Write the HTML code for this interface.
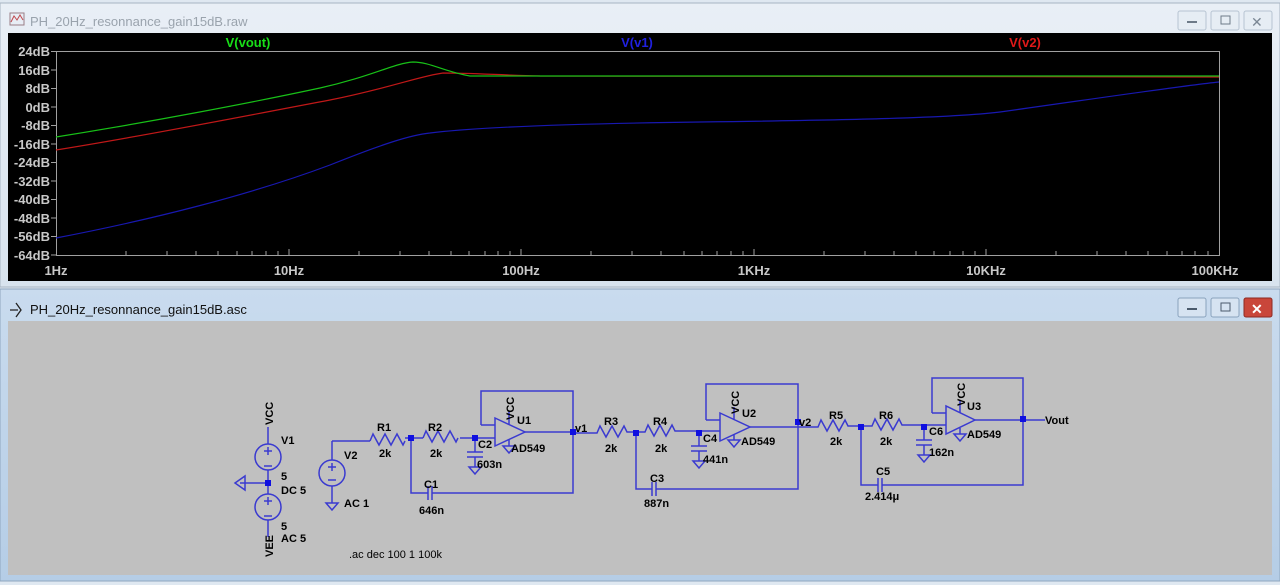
<!DOCTYPE html>
<html><head><meta charset="utf-8"><style>
html,body{margin:0;padding:0;background:#dfe8f1;width:1280px;height:585px;overflow:hidden;font-family:"Liberation Sans",sans-serif}
svg{position:absolute;left:0;top:0}
</style></head><body>
<svg width="1280" height="585" viewBox="0 0 1280 585" xmlns="http://www.w3.org/2000/svg" font-family="Liberation Sans, sans-serif">
<defs>
<linearGradient id="tb" x1="0" y1="0" x2="0" y2="1"><stop offset="0" stop-color="#e9eff6"/><stop offset="1" stop-color="#d8e3ee"/></linearGradient>
<linearGradient id="tb2" x1="0" y1="0" x2="0" y2="1"><stop offset="0" stop-color="#c9dbee"/><stop offset="1" stop-color="#b5cde6"/></linearGradient>
</defs>
<rect x="0" y="3" width="1280" height="284" fill="url(#tb)" stroke="#a7b4c2"/>
<rect x="10" y="13" width="14" height="12" fill="none" stroke="#9a7e86"/>
<path d="M11 22 l3-6 3 4 3-5 3 5" stroke="#c0494f" fill="none"/>
<text x="30" y="26" font-size="13" fill="#9aa3ad">PH_20Hz_resonnance_gain15dB.raw</text>
<g fill="#e6edf4" stroke="#b7c4d2"><rect x="1178" y="11" width="28" height="19" rx="2"/><rect x="1211" y="11" width="28" height="19" rx="2"/><rect x="1244" y="11" width="28" height="19" rx="2"/></g>
<rect x="1187" y="21" width="10" height="2" fill="#6d7a88"/><rect x="1221" y="16" width="9" height="8" fill="none" stroke="#6d7a88"/>
<text x="1251" y="27" font-size="14" fill="#7b8794">✕</text>
<rect x="8" y="33" width="1264" height="248" fill="#000"/>
<rect x="56.5" y="51.5" width="1163" height="204" fill="none" stroke="#a0a0a0"/>
<g font-size="13" font-weight="bold" fill="#c8c8c8" text-anchor="end">
<text x="50" y="56">24dB</text><text x="50" y="75">16dB</text><text x="50" y="93">8dB</text><text x="50" y="112">0dB</text><text x="50" y="130">-8dB</text><text x="50" y="149">-16dB</text><text x="50" y="167">-24dB</text><text x="50" y="186">-32dB</text><text x="50" y="204">-40dB</text><text x="50" y="223">-48dB</text><text x="50" y="241">-56dB</text><text x="50" y="260">-64dB</text>
</g>
<g stroke="#a0a0a0"><path d="M51 51.5h5M51 70h5M51 88.5h5M51 107h5M51 125.5h5M51 144h5M51 162.5h5M51 181h5M51 199.5h5M51 218h5M51 236.5h5M51 255h5"/>
<path d="M126 255v-4M167 255v-4M196 255v-4M218 255v-4M237 255v-4M252 255v-4M266 255v-4M278 255v-4M289 255v-6M359 255v-4M400 255v-4M429 255v-4M451 255v-4M469 255v-4M485 255v-4M498 255v-4M510 255v-4M521 255v-6M591 255v-4M632 255v-4M661 255v-4M684 255v-4M702 255v-4M717 255v-4M731 255v-4M743 255v-4M754 255v-6M824 255v-4M865 255v-4M894 255v-4M916 255v-4M934 255v-4M950 255v-4M963 255v-4M975 255v-4M986 255v-6M1056 255v-4M1097 255v-4M1126 255v-4M1148 255v-4M1167 255v-4M1182 255v-4M1195 255v-4M1208 255v-4"/></g>
<g font-size="13" font-weight="bold" fill="#c8c8c8" text-anchor="middle">
<text x="56" y="275">1Hz</text><text x="289" y="275">10Hz</text><text x="521" y="275">100Hz</text><text x="754" y="275">1KHz</text><text x="986" y="275">10KHz</text><text x="1215" y="275">100KHz</text>
</g>
<g font-size="13" font-weight="bold" text-anchor="middle">
<text x="248" y="47" fill="#18e018">V(vout)</text><text x="637" y="47" fill="#2020e0">V(v1)</text><text x="1025" y="47" fill="#e01818">V(v2)</text>
</g>
<path d="M56 238 C150 220 250 195 330 165 C380 145 410 135 430 133 C470 128 550 124 700 122 C850 120 950 118 1000 112 C1100 98 1180 86 1219 82" fill="none" stroke="#1818b0" stroke-width="1.2"/>
<path d="M56 150 C150 135 250 115 330 100 C390 88 420 76 443 73 C470 73 500 75 540 76 L1219 77" fill="none" stroke="#c01818" stroke-width="1.2"/>
<path d="M56 137 C150 122 250 103 320 88 C370 77 395 63 413 62 C430 62 445 72 470 76 L1219 76" fill="none" stroke="#18c018" stroke-width="1.2"/>
<rect x="0" y="289" width="1280" height="292" fill="url(#tb2)" stroke="#8fa6bf"/>
<path d="M10 310 h8 M16 303 l5 7 -5 7" stroke="#222" fill="none" stroke-width="1.3"/>
<text x="30" y="314" font-size="13" fill="#111">PH_20Hz_resonnance_gain15dB.asc</text>
<g fill="#d6e3f1" stroke="#8aa3bd"><rect x="1178" y="298" width="28" height="19" rx="2"/><rect x="1211" y="298" width="28" height="19" rx="2"/></g>
<rect x="1244" y="298" width="28" height="19" rx="2" fill="#c9463a" stroke="#8d2a22"/>
<rect x="1187" y="308" width="10" height="2" fill="#4a5a6c"/><rect x="1221" y="303" width="9" height="8" fill="none" stroke="#4a5a6c"/>
<text x="1251" y="314" font-size="14" font-weight="bold" fill="#fff">✕</text>
<rect x="8" y="321" width="1264" height="254" fill="#c0c0c0"/>
<g stroke="#3a3ad0" fill="none" stroke-width="1.5">
<path d="M268 427V444M268 470V494M268 520V537M240 483H268"/>
<circle cx="268" cy="457" r="13"/><circle cx="268" cy="507" r="13"/>
<path d="M264 451h8M268 447v8M264 466h8M264 501h8M268 497v8M264 516h8"/>
<path d="M245 476v14l-10-7z"/>
<path d="M332 441V460M332 486V503M332 441H370M405 438H423M460 438H495M326 503h12l-6 7z"/>
<circle cx="332" cy="473" r="13"/><path d="M328 467h8M332 463v8M328 480h8"/>
<path d="M370 441l3-7 6 11 6-11 6 11 6-11 6 11 2-4M423 438l3-7 6 11 6-11 6 11 6-11 6 11 2-4"/>
<path d="M411 438V493H428M432 493H573V432M525 432H573M481 425V391H573V432M481 425H495"/>
<path d="M428 486v14M432 486v14"/>
<path d="M475 438V452M467 452h16M467 457h16M475 457V467M469 467h12l-6 7z"/>
<path d="M495 418V446L525 432Z"/><path d="M509 424V412M509 440V446M503 446h12l-6 7z"/>
<path d="M573 433H597L600 426l6 11 6-11 6 11 6-11 3 6H645l3-7 6 11 6-11 6 11 6-11 3 6H720"/>
<path d="M636 433V489H652M656 489H798V422M750 427H798M706 420V384H798V422M706 420H720"/>
<path d="M652 482v14M656 482v14"/>
<path d="M699 433V446M691 446h16M691 451h16M699 451V461M693 461h12l-6 7z"/>
<path d="M720 413V441L750 427Z"/><path d="M734 420V407M734 434V440M728 440h12l-6 7z"/>
<path d="M798 427H818L821 420l6 11 6-11 6 11 6-11 3 6H872l3-7 6 11 6-11 6 11 6-11 3 6H946"/>
<path d="M861 427V485H878M882 485H1023V419M975 420H1045M932 413V378H1023V419M932 413H946"/>
<path d="M878 478v14M882 478v14"/>
<path d="M924 427V440M916 440h16M916 445h16M924 445V455M918 455h12l-6 7z"/>
<path d="M946 406V434L975 420Z"/><path d="M960 413V400M960 428V434M954 434h12l-6 7z"/>
</g>
<g fill="#1010e0"><rect x="265" y="480" width="6" height="6"/><rect x="408" y="435" width="6" height="6"/><rect x="472" y="435" width="6" height="6"/><rect x="570" y="429" width="6" height="6"/><rect x="633" y="430" width="6" height="6"/><rect x="696" y="430" width="6" height="6"/><rect x="795" y="419" width="6" height="6"/><rect x="858" y="424" width="6" height="6"/><rect x="921" y="424" width="6" height="6"/><rect x="1020" y="416" width="6" height="6"/></g>
<g font-size="11" font-weight="bold" fill="#000">
<text transform="translate(273,425) rotate(-90)">VCC</text><text transform="translate(273,557) rotate(-90)">VEE</text>
<text x="281" y="444">V1</text><text x="281" y="480">5</text><text x="281" y="494">DC 5</text><text x="281" y="530">5</text><text x="281" y="542">AC 5</text>
<text x="344" y="459">V2</text><text x="344" y="507">AC 1</text>
<text x="377" y="431">R1</text><text x="379" y="457">2k</text><text x="428" y="431">R2</text><text x="430" y="457">2k</text>
<text x="478" y="448">C2</text><text x="477" y="468">603n</text><text x="424" y="488">C1</text><text x="419" y="514">646n</text>
<text transform="translate(514,420) rotate(-90)">VCC</text><text x="517" y="424">U1</text><text x="511" y="452">AD549</text>
<text x="575" y="432">v1</text>
<text x="604" y="425">R3</text><text x="605" y="452">2k</text><text x="653" y="425">R4</text><text x="655" y="452">2k</text>
<text x="703" y="442">C4</text><text x="703" y="463">441n</text><text x="650" y="482">C3</text><text x="644" y="507">887n</text>
<text transform="translate(739,414) rotate(-90)">VCC</text><text x="742" y="417">U2</text><text x="741" y="445">AD549</text>
<text x="799" y="426">v2</text>
<text x="829" y="419">R5</text><text x="830" y="445">2k</text><text x="879" y="419">R6</text><text x="880" y="445">2k</text>
<text x="929" y="435">C6</text><text x="929" y="456">162n</text><text x="876" y="475">C5</text><text x="865" y="500">2.414μ</text>
<text transform="translate(965,406) rotate(-90)">VCC</text><text x="967" y="410">U3</text><text x="967" y="438">AD549</text>
<text x="1045" y="424">Vout</text>
<text x="349" y="558" font-weight="normal">.ac dec 100 1 100k</text>
</g>
</svg>
</body></html>
